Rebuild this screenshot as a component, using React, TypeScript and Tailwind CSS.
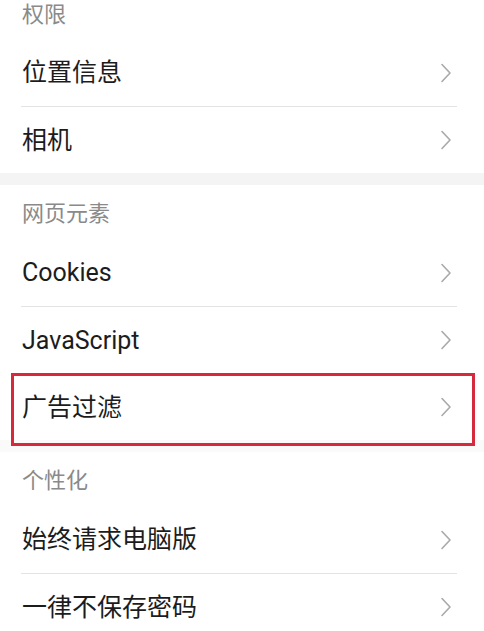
const font = "font-['Roboto','Noto_Sans_CJK_SC',sans-serif]";

function Chevron() {
  return (
    <svg width="12" height="20" viewBox="0 0 12 20" fill="none" className="shrink-0">
      <path d="M2 1.5 L10 10 L2 18.5" stroke="#a9a9a9" strokeWidth="1.6" strokeLinecap="round" strokeLinejoin="round" />
    </svg>
  );
}

function Header({ title, first }: { title: string; first?: boolean }) {
  return (
    <div className={first ? "h-[39px] pl-[22px] pt-[4px]" : "h-[54px] pl-[22px] pt-[18px]"}>
      <span className="text-[22px] leading-[22px] text-[#8a8a8a]">{title}</span>
    </div>
  );
}

function Row({ label, divider, boxed }: { label: string; divider?: boolean; boxed?: boolean }) {
  return (
    <div className="relative">
      <div className={`ml-[21px] mr-[27px] h-[67px] flex items-center justify-between pr-[5px] ${divider ? "border-t border-[#e4e4e4]" : ""}`}>
        <span className="pl-[1px] text-[25px] leading-none text-[#1c1c1c]">{label}</span>
        <Chevron />
      </div>
      {boxed && (
        <div className="absolute left-[11px] right-[9px] top-0 bottom-[-6px] border-[3px] border-[#d42a3b]" />
      )}
    </div>
  );
}

function Band({ faint }: { faint?: boolean }) {
  return <div className={`h-[12px] ${faint ? "bg-[#fafafa]" : "bg-[#f4f4f4]"}`} />;
}

export default function App() {
  return (
    <div className={`w-[484px] h-[631px] overflow-hidden bg-white ${font}`}>
      <Header title="权限" first />
      <Row label="位置信息" />
      <Row label="相机" divider />
      <Band />
      <Header title="网页元素" />
      <Row label="Cookies" />
      <Row label="JavaScript" divider />
      <Row label="广告过滤" divider boxed />
      <Band faint />
      <Header title="个性化" />
      <Row label="始终请求电脑版" />
      <Row label="一律不保存密码" divider />
    </div>
  );
}
